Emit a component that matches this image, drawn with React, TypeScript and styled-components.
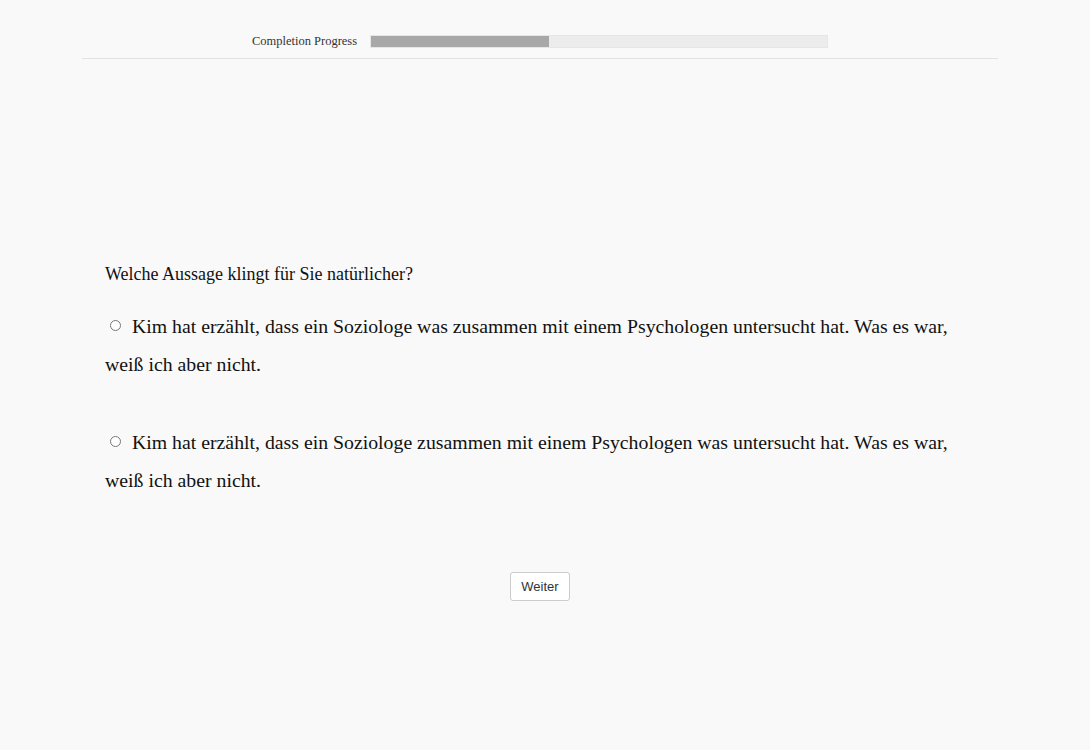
import React from "react";
import styled, { createGlobalStyle } from "styled-components";

const Global = createGlobalStyle`
  html, body { margin: 0; padding: 0; background: #f9f9f9; }
  body { font-family: "Liberation Serif", "Times New Roman", serif; color: #111; }
`;

const Page = styled.div`
  width: 1080px;
`;

const Header = styled.header`
  width: 916px;
  margin: 0 auto;
  padding-top: 34px;
  padding-bottom: 9px;
  border-bottom: 1px solid #e2e2e2;
  display: flex;
  justify-content: center;
  align-items: center;
  gap: 13px;
`;

const ProgressLabel = styled.span`
  font-size: 12.5px;
  color: #333;
`;

const Track = styled.div`
  width: 458px;
  height: 13px;
  background: #ececec;
  border: 1px solid #e6e6e6;
  box-sizing: border-box;
`;

const Fill = styled.div`
  height: 100%;
  background: #a8a8a8;
`;

const Main = styled.main`
  width: 870px;
  margin: 0 auto;
  padding: 205px 23px 0;
`;

const Question = styled.p`
  font-size: 18px;
  margin: 0 0 22px;
`;

const Option = styled.label`
  display: block;
  font-size: 19.8px;
  line-height: 38px;
  margin-bottom: 40px;
  cursor: pointer;
`;

const Radio = styled.span`
  display: inline-block;
  width: 9px;
  height: 9px;
  border: 1px solid #777;
  border-radius: 50%;
  background: #fff;
  margin: 0 11px 0 5px;
  vertical-align: 2px;
`;

const Footer = styled.div`
  display: flex;
  justify-content: center;
  margin-top: 73px;
`;

const Button = styled.button`
  font-family: "Liberation Sans", Arial, sans-serif;
  font-size: 13px;
  color: #333;
  background: #fff;
  border: 1px solid #ccc;
  border-radius: 3px;
  width: 60px;
  height: 29px;
  padding: 0;
  cursor: pointer;
`;

const options = [
  "Kim hat erzählt, dass ein Soziologe was zusammen mit einem Psychologen untersucht hat. Was es war, weiß ich aber nicht.",
  "Kim hat erzählt, dass ein Soziologe zusammen mit einem Psychologen was untersucht hat. Was es war, weiß ich aber nicht.",
];

export default function App() {
  const progress = 39;
  return (
    <Page>
      <Global />
      <Header>
        <ProgressLabel>Completion Progress</ProgressLabel>
        <Track>
          <Fill style={{ width: `${progress}%` }} />
        </Track>
      </Header>
      <Main>
        <Question>Welche Aussage klingt für Sie natürlicher?</Question>
        {options.map((o) => (
          <Option key={o}>
            <Radio />
            {o}
          </Option>
        ))}
        <Footer>
          <Button>Weiter</Button>
        </Footer>
      </Main>
    </Page>
  );
}
